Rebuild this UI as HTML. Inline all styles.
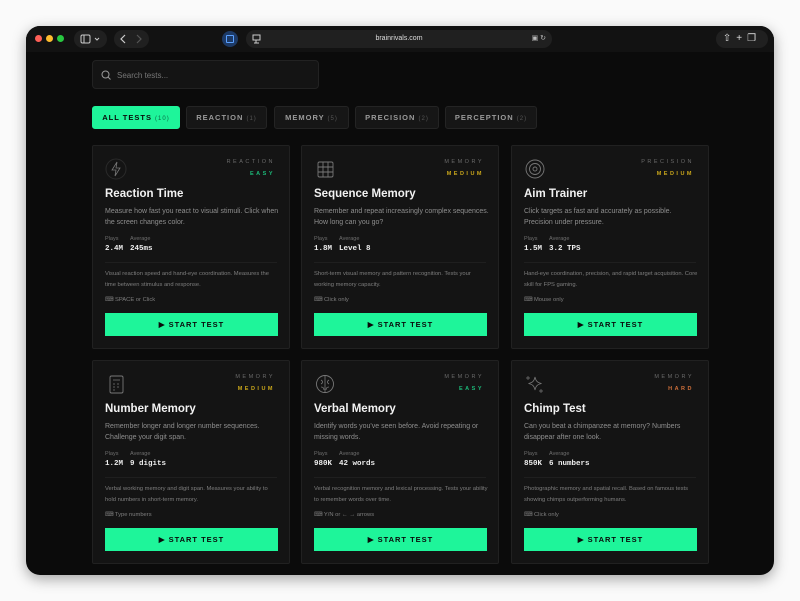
<!DOCTYPE html>
<html><head><meta charset="utf-8"><style>
*{box-sizing:border-box;margin:0;padding:0}
body{width:800px;height:601px;background:#fafafa;font-family:"Liberation Sans",sans-serif;position:relative;overflow:hidden}
.win{position:absolute;left:26px;top:26px;width:748px;height:549px;background:#0b0b0b;border-radius:14px;overflow:hidden;box-shadow:0 4px 14px rgba(0,0,0,.35)}
.bar{position:absolute;left:0;top:0;width:100%;height:26px;background:#121212}
.dot{position:absolute;top:9px;width:7px;height:7px;border-radius:50%}
.pill{position:absolute;background:#202020;border-radius:9px;height:18px;top:4px}
.search{position:absolute;left:66px;top:34px;width:227px;height:29px;background:#141414;border:1px solid #222;border-radius:4px;color:#777;font-size:8px;padding:10px 0 0 24px}
.tab{position:absolute;top:80px;height:23px;border-radius:3px;background:#161616;border:1px solid #242424;color:#9a9a9a;font-size:7.5px;font-weight:bold;letter-spacing:1px;text-align:center;line-height:21px}
.tab span{color:#555;font-weight:normal;font-size:6px}
.card{position:absolute;width:198px;height:204px;background:#141414;border:1px solid #212121;border-radius:2px}
.ic{position:absolute;left:12px;top:12px;width:22px;height:22px}
.ic *{stroke:#777}
.cat{position:absolute;right:14px;top:13px;font-size:5.5px;letter-spacing:2.5px;color:#6a6a6a}
.dif{position:absolute;right:14px;top:25px;font-size:5.5px;letter-spacing:2.5px;font-weight:bold}
.t{position:absolute;left:12px;top:42px;font-size:11.5px;font-weight:bold;color:#f2f2f2}
.d{position:absolute;left:12px;top:60px;width:175px;font-size:7px;line-height:11px;color:#8e8e8e}
.sl{position:absolute;top:90px;font-size:5.5px;color:#6e6e6e}
.sv{position:absolute;top:99px;font-family:"Liberation Mono",monospace;font-weight:bold;font-size:7.5px;color:#eee}
.hr{position:absolute;left:12px;right:12px;top:116px;border-top:1px solid #1f1f1f}
.ld{position:absolute;left:12px;top:123px;width:175px;font-size:5.8px;line-height:10.5px;color:#7e7e7e}
.in{position:absolute;left:12px;top:151px;font-size:5.8px;color:#7e7e7e}
.btn{position:absolute;left:12px;top:167px;width:173px;height:23px;background:#1ef59a;color:#0a0a0a;font-size:7.5px;font-weight:bold;letter-spacing:1px;text-align:center;line-height:23px}
</style></head><body>
<div class="win">
<div class="bar">
<div class="dot" style="left:9px;background:#fe5f57"></div>
<div class="dot" style="left:20px;background:#febc2e"></div>
<div class="dot" style="left:31px;background:#28c840"></div>
<div class="pill" style="left:48px;width:33px"><svg width="33" height="18"><rect x="7" y="5" width="9" height="8" rx="1.5" fill="none" stroke="#ccc" stroke-width="1"/><line x1="10" y1="5" x2="10" y2="13" stroke="#ccc"/><path d="M21 8l2 2 2-2" fill="none" stroke="#ccc"/></svg></div>
<div class="pill" style="left:88px;width:35px"><svg width="35" height="18"><path d="M11 5l-4 4 4 4" fill="none" stroke="#ccc" stroke-width="1.2"/><path d="M23 5l4 4-4 4" fill="none" stroke="#555" stroke-width="1.2"/></svg></div>
<div style="position:absolute;left:196px;top:5px;width:16px;height:16px;border-radius:50%;background:#1d3a66"><div style="margin:4px;width:8px;height:8px;border:1px solid #5aa0ff;border-radius:1px"></div></div>
<div class="pill" style="left:220px;width:306px;color:#ddd;font-size:7px;text-align:center;line-height:18px">brainrivals.com<svg style="position:absolute;left:6px;top:4px" width="10" height="10"><rect x="1" y="1" width="7" height="5" fill="none" stroke="#ccc"/><line x1="4" y1="6" x2="4" y2="9" stroke="#ccc"/><line x1="2" y1="9" x2="7" y2="9" stroke="#ccc"/></svg><span style="position:absolute;right:6px;top:0;color:#bbb;font-size:7px">▣ ↻</span></div>
<div class="pill" style="left:690px;width:52px;color:#ddd;font-size:10px;line-height:18px;text-align:center;letter-spacing:5px">⇧+❐</div>
</div>
<div class="search"><svg style="position:absolute;left:8px;top:9px" width="10" height="10"><circle cx="4.5" cy="4.5" r="3.5" fill="none" stroke="#999"/><line x1="7" y1="7" x2="9.5" y2="9.5" stroke="#999"/></svg>Search tests...</div>
<div class="tab" style="left:66px;width:88px;background:#1ef59a;border-color:#1ef59a;color:#0a0a0a">ALL TESTS <span style="color:#0a6a45">(10)</span></div>
<div class="tab" style="left:160px;width:81px">REACTION <span>(1)</span></div>
<div class="tab" style="left:248px;width:75px">MEMORY <span>(5)</span></div>
<div class="tab" style="left:329px;width:84px">PRECISION <span>(2)</span></div>
<div class="tab" style="left:419px;width:92px">PERCEPTION <span>(2)</span></div>

<div class="card" style="left:66px;top:119px">
<svg class="ic" viewBox="0 0 22 22"><circle cx="11" cy="11" r="10" fill="none" style="stroke:#2a2a2a"/><path d="M12 4l-5 8h4l-1 6 5-8h-4z" fill="none" stroke-width=".8"/></svg>
<div class="cat">REACTION</div><div class="dif" style="color:#1cb878">EASY</div>
<div class="t">Reaction Time</div>
<div class="d">Measure how fast you react to visual stimuli. Click when the screen changes color.</div>
<div class="sl" style="left:12px">Plays</div><div class="sl" style="left:37px">Average</div>
<div class="sv" style="left:12px">2.4M</div><div class="sv" style="left:37px">245ms</div>
<div class="hr"></div>
<div class="ld">Visual reaction speed and hand-eye coordination. Measures the time between stimulus and response.</div>
<div class="in">⌨ SPACE or Click</div>
<div class="btn">▶ START TEST</div></div>

<div class="card" style="left:275px;top:119px">
<svg class="ic" viewBox="0 0 22 22"><rect x="4" y="4" width="15" height="15" rx="1.5" fill="none" stroke-width=".9"/><path d="M9 4v15M14 4v15M4 9h15M4 14h15" stroke-width=".9"/></svg>
<div class="cat">MEMORY</div><div class="dif" style="color:#c9a61a">MEDIUM</div>
<div class="t">Sequence Memory</div>
<div class="d">Remember and repeat increasingly complex sequences. How long can you go?</div>
<div class="sl" style="left:12px">Plays</div><div class="sl" style="left:37px">Average</div>
<div class="sv" style="left:12px">1.8M</div><div class="sv" style="left:37px">Level 8</div>
<div class="hr"></div>
<div class="ld">Short-term visual memory and pattern recognition. Tests your working memory capacity.</div>
<div class="in">⌨ Click only</div>
<div class="btn">▶ START TEST</div></div>

<div class="card" style="left:485px;top:119px">
<svg class="ic" viewBox="0 0 22 22"><circle cx="11" cy="11" r="9" fill="none" stroke-width=".9"/><circle cx="11" cy="11" r="5.5" fill="none" stroke-width=".9"/><circle cx="11" cy="11" r="2" fill="none" stroke-width=".9"/></svg>
<div class="cat">PRECISION</div><div class="dif" style="color:#c9a61a">MEDIUM</div>
<div class="t">Aim Trainer</div>
<div class="d">Click targets as fast and accurately as possible. Precision under pressure.</div>
<div class="sl" style="left:12px">Plays</div><div class="sl" style="left:37px">Average</div>
<div class="sv" style="left:12px">1.5M</div><div class="sv" style="left:37px">3.2 TPS</div>
<div class="hr"></div>
<div class="ld">Hand-eye coordination, precision, and rapid target acquisition. Core skill for FPS gaming.</div>
<div class="in">⌨ Mouse only</div>
<div class="btn">▶ START TEST</div></div>

<div class="card" style="left:66px;top:334px">
<svg class="ic" viewBox="0 0 22 22"><rect x="5" y="3" width="13" height="17" rx="1.5" fill="none" stroke-width=".9"/><path d="M8 7h7M8 11h2M12 11h2M8 14h2M12 14h2M8 17h2" stroke-width=".8"/></svg>
<div class="cat">MEMORY</div><div class="dif" style="color:#c9a61a">MEDIUM</div>
<div class="t">Number Memory</div>
<div class="d">Remember longer and longer number sequences. Challenge your digit span.</div>
<div class="sl" style="left:12px">Plays</div><div class="sl" style="left:37px">Average</div>
<div class="sv" style="left:12px">1.2M</div><div class="sv" style="left:37px">9 digits</div>
<div class="hr"></div>
<div class="ld">Verbal working memory and digit span. Measures your ability to hold numbers in short-term memory.</div>
<div class="in">⌨ Type numbers</div>
<div class="btn">▶ START TEST</div></div>

<div class="card" style="left:275px;top:334px">
<svg class="ic" viewBox="0 0 22 22"><circle cx="11" cy="11" r="8.5" fill="none" stroke-width=".9"/><path d="M11 3v16M7 7c2 1 2 3 0 4M15 7c-2 1-2 3 0 4M7 14c2 0 3 1 3 3M15 14c-2 0-3 1-3 3" fill="none" stroke-width=".8"/></svg>
<div class="cat">MEMORY</div><div class="dif" style="color:#1cb878">EASY</div>
<div class="t">Verbal Memory</div>
<div class="d">Identify words you've seen before. Avoid repeating or missing words.</div>
<div class="sl" style="left:12px">Plays</div><div class="sl" style="left:37px">Average</div>
<div class="sv" style="left:12px">980K</div><div class="sv" style="left:37px">42 words</div>
<div class="hr"></div>
<div class="ld">Verbal recognition memory and lexical processing. Tests your ability to remember words over time.</div>
<div class="in">⌨ Y/N or ← → arrows</div>
<div class="btn">▶ START TEST</div></div>

<div class="card" style="left:485px;top:334px">
<svg class="ic" viewBox="0 0 22 22"><path d="M11 4c.8 4 2.5 5.7 6.5 6.5-4 .8-5.7 2.5-6.5 6.5-.8-4-2.5-5.7-6.5-6.5 4-.8 5.7-2.5 6.5-6.5z" fill="none" stroke-width=".8"/><path d="M4 3v4M2 5h4M17 16v4M15 18h4" stroke-width=".7"/></svg>
<div class="cat">MEMORY</div><div class="dif" style="color:#d0703a">HARD</div>
<div class="t">Chimp Test</div>
<div class="d">Can you beat a chimpanzee at memory? Numbers disappear after one look.</div>
<div class="sl" style="left:12px">Plays</div><div class="sl" style="left:37px">Average</div>
<div class="sv" style="left:12px">850K</div><div class="sv" style="left:37px">6 numbers</div>
<div class="hr"></div>
<div class="ld">Photographic memory and spatial recall. Based on famous tests showing chimps outperforming humans.</div>
<div class="in">⌨ Click only</div>
<div class="btn">▶ START TEST</div></div>
</div>
</body></html>
